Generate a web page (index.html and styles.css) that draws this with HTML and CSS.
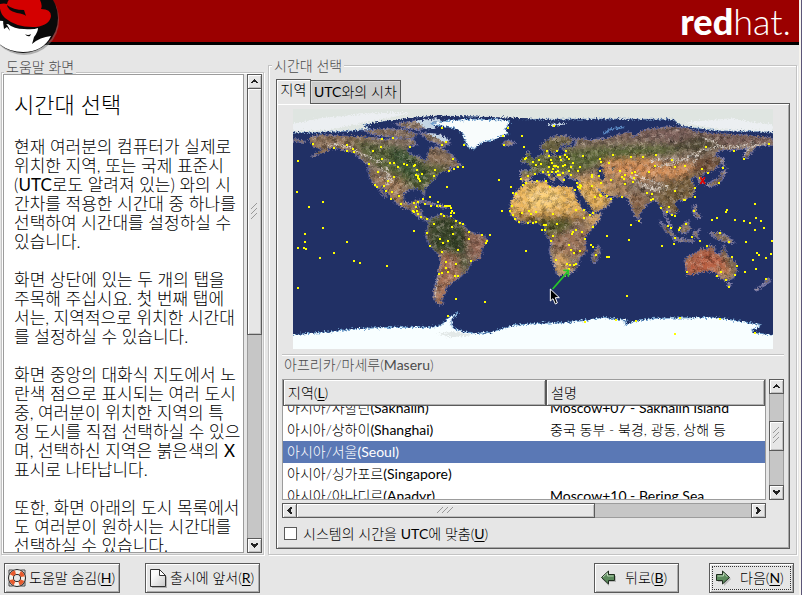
FILE: index.html
```html
<!DOCTYPE html>
<html lang="ko">
<head>
<meta charset="utf-8">
<title>시간대 선택</title>
<link rel="stylesheet" href="styles.css">
</head>
<body>
<div class="window">
  <header class="banner">
    <svg class="shadowman" viewBox="0 0 60 55" aria-hidden="true">
      <circle cx="24" cy="20" r="35" fill="#777" opacity=".5"/>
      <circle cx="23" cy="18" r="35" fill="#0a0a0a"/>
      <path d="M-12 20L3 21Q4 25 8 24Q14 29 24 29Q34 30 38 28Q38 32 34 37Q33 41 32 44Q40 37 51 36Q43 52 23 52Q3 52-10 34Z" fill="#fff"/>
      <path d="M3 22Q8 24 10 31L7 27 4 29Z" fill="#0a0a0a"/>
      <path d="M25 34Q28 36 31 34L30 36Q27 37 25 34Z" fill="#0a0a0a"/>
      <path d="M0 4Q4 3 7 4Q8-1 12-2L39-2Q43 5 41 9Q51 9 51 16Q50 25 36 27Q17 28 5 18Q-1 12 0 4Z" fill="#d40000"/>
      <path d="M7 5Q7 10 17 13Q24 14 26 16L24 10Q13 10 7 5Z" fill="#0a0a0a"/>
    </svg>
    <div class="wordmark"><b>red</b>hat.</div>
  </header>

  <main class="panels">
    <section class="frame help">
      <h2 class="frame-title">도움말 화면</h2>
      <div class="help-row">
        <article class="help-text">
          <h1>시간대 선택</h1>
          <p>현재 여러분의 컴퓨터가 실제로<br>위치한 지역, 또는 국제 표준시<br>(<span class="strong">UTC</span>로도 알려져 있는) 와의 시<br>간차를 적용한 시간대 중 하나를<br>선택하여 시간대를 설정하실 수<br>있습니다.</p>
          <p>화면 상단에 있는 두 개의 탭을<br>주목해 주십시요. 첫 번째 탭에<br>서는, 지역적으로 위치한 시간대<br>를 설정하실 수 있습니다.</p>
          <p>화면 중앙의 대화식 지도에서 노<br>란색 점으로 표시되는 여러 도시<br>중, 여러분이 위치한 지역의 특<br>정 도시를 직접 선택하실 수 있으<br>며, 선택하신 지역은 붉은색의 <b>X</b><br>표시로 나타납니다.</p>
          <p>또한, 화면 아래의 도시 목록에서<br>도 여러분이 원하시는 시간대를<br>선택하실 수 있습니다.</p>
        </article>
        <div class="scroll scroll-v">
          <button class="step" aria-label="위로"><svg viewBox="0 0 7 5"><path d="M3 0h1v1h1v1h1v1h1v1H5V3H2v1H0V3h1V2h1V1h1z"/></svg></button>
          <div class="thumb help-thumb"><svg class="grip" viewBox="0 0 7 17"><path d="M0 6L6 0M0 11L6 5M0 16L6 10"/></svg></div>
          <div class="trough"></div>
          <button class="step" aria-label="아래로"><svg viewBox="0 0 7 5"><path d="M0 0h2v1h3V0h2v2H6v1H5v1H4v1H3V4H2V3H1V2H0z"/></svg></button>
        </div>
      </div>
    </section>

    <section class="frame zone">
      <h2 class="frame-title">시간대 선택</h2>
      <div class="tabs" role="tablist">
        <button class="tab active" role="tab" aria-selected="true">지역</button>
        <button class="tab" role="tab" aria-selected="false"><span class="strong">UTC</span>와의 시차</button>
      </div>
      <div class="page">
        <svg class="map" viewBox="69 177 1440 720" role="img" aria-label="세계 지도">
          <defs>
            <filter id="coast" x="0" y="0" width="1" height="1">
              <feTurbulence type="fractalNoise" baseFrequency=".18" numOctaves="3" seed="4"/>
              <feDisplacementMap in="SourceGraphic" scale="17" xChannelSelector="R" yChannelSelector="G"/>
            </filter>
            <filter id="grain" x="0" y="0" width="1" height="1">
              <feTurbulence type="fractalNoise" baseFrequency=".07" numOctaves="4" seed="9"/>
              <feColorMatrix values="0 0 0 0 0  0 0 0 0 0  0 0 0 0 0  2.4 0 0 0 -1.05"/>
            </filter>
            <filter id="glint" x="0" y="0" width="1" height="1">
              <feTurbulence type="fractalNoise" baseFrequency=".08" numOctaves="4" seed="21"/>
              <feColorMatrix values="0 0 0 0 1  0 0 0 0 .85  0 0 0 0 .75  0 2.4 0 0 -1.1"/>
            </filter>
            <filter id="soft" x="-.3" y="-.3" width="1.6" height="1.6"><feGaussianBlur stdDeviation="10"/></filter>
            <path id="north-america" d="M120 262L150 255 200 258 250 260 300 262 350 268 400 262 430 270 440 285 415 290 412 305 425 315 450 320 465 335 475 322 475 310 480 295 500 290 525 300 545 315 560 335 575 345 550 352 530 350 545 360 505 368 495 385 480 400 465 415 462 437 455 420 440 415 420 418 400 430 400 455 420 462 440 448 450 452 440 470 452 478 455 495 475 507 490 502 470 512 445 502 420 480 390 468 370 450 355 430 335 405 330 410 350 440 345 442 325 415 315 405 300 385 295 360 293 345 275 330 260 315 245 305 215 298 185 292 165 305 125 320 140 310 160 298 130 290 120 275Z"/>
            <path id="atlantic-isles" d="M69 265L105 275 100 280 69 272ZM280 242L340 236 400 238 442 252 430 265 380 262 320 256ZM375 222L440 212 475 232 440 240 400 232ZM450 247L510 255 540 278 520 292 500 280 470 268ZM445 455L470 452 502 465 480 463ZM505 464L530 468 530 474 505 472ZM700 275L716 272 735 278 720 286 702 284Z"/>
            <path id="south-america" d="M478 510L492 502 510 495 535 498 555 510 580 525 595 545 640 557 652 572 638 590 630 625 605 635 590 665 570 680 562 690 545 695 538 705 528 715 525 730 513 745 520 761 505 762 492 745 492 720 500 695 505 670 512 640 512 620 490 598 478 580 466 558 472 540Z"/>
            <path id="africa" d="M757 408L775 394 825 392 835 405 855 412 870 408 908 415 920 450 940 480 960 495 993 490 990 503 970 528 945 560 945 585 948 605 930 620 925 640 915 660 890 675 865 677 858 665 850 635 838 605 843 575 827 550 825 530 808 518 750 518 735 505 720 490 722 460 735 430ZM984 586L991 600 978 637 967 637 968 612Z"/>
            <path id="eurasia" transform="translate(780)" d="M-28 390L-28 362 2 362 8 350-5 342 15 330 25 318 42 312 48 298 55 298 55 316 90 318 110 308 95 295 130 290 140 275 125 268 150 265 185 270 230 265 280 250 300 245 310 262 340 240 420 230 470 235 500 245 560 252 640 255 729 264 729 285 700 285 680 290 650 325 640 320 652 295 610 300 570 300 555 315 580 325 570 345 545 362 520 370 515 380 524 400 510 400 499 378 480 385 495 410 490 435 465 450 445 450 430 460 445 480 435 492 420 490 410 480 408 500 425 530 415 522 400 482 385 460 375 450 355 460 330 490 325 505 315 500 300 460 290 440 260 440 240 437 215 425 200 405 210 430 248 450 230 470 190 488 180 482 165 450 148 425 143 400 150 390 120 385 115 375 100 380 100 395 85 385 70 365 60 372 75 385 70 395 50 375 35 365 10 375 0 385-10 395Z"/>
            <path id="eurasian-isles" transform="translate(780)" d="M30 292L45 275 75 258 105 256 130 268 115 287 95 280 86 298 72 310 58 298 38 300ZM-15 328L-7 304 8 325 18 343-5 345ZM-25 325L-15 322-16 336-25 338ZM528 407L548 392 568 386 574 366 590 358 580 382 568 400 540 410ZM576 325L582 325 584 350 578 350ZM490 465L500 468 498 485 512 500 505 507 490 490ZM322 508L332 506 330 516Z"/>
            <path id="oceania" transform="translate(780 480)" d="M448 52L475 33 481 58 465 72 450 66ZM388 33L410 50 434 76 430 84 405 62ZM432 84L490 91 490 97 432 91ZM490 65L508 60 500 68 505 85 492 80ZM540 68L570 68 598 82 612 100 580 94 560 88ZM463 150L475 140 495 130 515 115 535 118 540 105 557 112 552 125 572 137 580 105 592 135 615 155 620 180 610 205 588 212 565 200 555 185 530 182 500 192 472 195 470 175ZM592 221L603 221 597 232ZM712 206L722 212 704 224 678 243 676 238 700 222Z"/>
            <clipPath id="land-clip">
              <use href="#north-america"/><use href="#atlantic-isles"/><use href="#south-america"/><use href="#africa"/><use href="#eurasia"/><use href="#eurasian-isles"/><use href="#oceania"/>
            </clipPath>
            <clipPath id="frame-clip"><rect x="69" y="177" width="1440" height="720"/></clipPath>
          </defs>
          <rect x="69" y="177" width="1440" height="720" fill="#213065"/>
          <g clip-path="url(#frame-clip)">
            <g filter="url(#coast)">
              <g fill="#85705f" stroke="#7474a0" stroke-width="4">
                <use href="#north-america"/><use href="#atlantic-isles"/><use href="#south-america"/><use href="#africa"/><use href="#eurasia"/><use href="#eurasian-isles"/><use href="#oceania"/>
              </g>
              <g clip-path="url(#land-clip)">
                <g filter="url(#soft)">
                  <path fill="#8b6f58" d="M90 240H300L260 310 120 330ZM460 280L580 350 520 370 470 335Z"/>
                  <path fill="#566238" d="M240 270L330 285 415 300 460 340 545 350 450 430 390 390 310 340Z"/>
                  <path fill="#3c5634" d="M350 285L410 300 450 345 480 385 440 400 380 350Z"/>
                  <path fill="#a07b5c" d="M300 370L400 390 400 450 440 480 360 450Z"/>
                  <path fill="#38452a" d="M470 500L560 500 600 560 590 610 540 620 480 600Z"/>
                  <path fill="#4a5635" d="M450 470L500 510 560 670 590 650 600 620 560 630Z"/>
                  <path fill="#946757" d="M590 545L670 550 630 640 600 620Z"/>
                  <path fill="#a87358" d="M515 605L560 620 570 670 530 780 490 760 495 690Z"/>
                  <path fill="#edb75d" d="M710 390L920 390 950 488 700 500Z"/>
                  <path fill="#fbcf76" d="M770 420L840 410 880 440 860 470 780 480Z"/>
                  <path fill="#a6743f" d="M700 492H950V512H700Z"/>
                  <path fill="#595a2c" d="M750 508L900 502 905 530 850 560 830 550Z"/>
                  <path fill="#9a7258" d="M840 560L960 530 950 620 860 620Z"/>
                  <path fill="#dfac67" d="M840 625L885 610 905 660 870 680ZM955 498L1000 480 980 530 950 530Z"/>
                  <path fill="#5d6739" d="M750 310L900 300 1000 290 1200 285 1260 300 1130 320 1000 340 920 370 850 365 760 375Z"/>
                  <path fill="#67613e" d="M800 260L920 270 880 320 820 320Z"/>
                  <path fill="#7c615a" d="M900 250L1230 225 1520 255 1500 285 1280 290 1130 270Z"/>
                  <path fill="#4f4836" d="M1180 290L1290 255 1360 280 1290 310Z"/>
                  <path fill="#d48f58" d="M1000 330L1130 325 1200 345 1290 335 1240 385 1120 390 1000 385Z"/>
                  <path fill="#b78b61" d="M910 375L1050 370 1080 440 970 420Z"/>
                  <path fill="#e8b156" d="M920 395L985 395 1030 450 970 490Z"/>
                  <path fill="#765f3e" d="M1185 390L1280 370 1280 440 1230 500 1150 450Z"/>
                  <path fill="#6d4b35" d="M1270 330L1350 320 1330 370 1270 370Z"/>
                  <path fill="#8c6547" d="M1070 430L1130 440 1110 510Z"/>
                  <path fill="#b85f42" d="M1240 630L1310 590 1400 650 1370 670 1250 680Z"/>
                  <path fill="#786448" d="M1350 580L1400 640 1405 680 1370 650Z"/>
                  <path fill="#d99c69" d="M1330 650L1385 670 1370 690ZM1240 620L1260 625 1250 640Z"/>
                </g>
                <g fill="none" stroke="#dad2c8" stroke-width="5" stroke-dasharray="11 3 5 4">
                  <path d="M170 292L195 282 240 292 265 308 300 322 340 340M330 355L360 375 365 400M325 380L365 390M350 350L352 405M498 620L506 650 500 700 495 740"/>
                  <path d="M1080 380L1110 400 1150 415 1190 418M1095 375L1150 395 1195 410M1115 410L1170 425M1140 335L1180 325 1240 330 1260 315M1160 350L1210 340 1285 315 1270 340M1260 315L1300 300 1350 290 1330 275 1290 260M1350 290L1400 292 1450 278M1420 318L1440 290 1490 280"/>
                </g>
                <rect x="69" y="177" width="1440" height="720" filter="url(#grain)" opacity=".5"/>
                <rect x="69" y="177" width="1440" height="720" filter="url(#glint)" opacity=".45"/>
              </g>
              <path fill="#213065" d="M981 353L1000 350 995 365 1008 385 995 391 985 375Z"/>
              <path fill="none" stroke="#213065" stroke-width="8" d="M925 426L943 455 967 486"/>
              <path fill="#3e5968" d="M1022 354L1032 352 1030 362Z"/>
              <path fill="#dfe5e1" stroke="#6893c4" stroke-width="2" d="M50 160H1530V247L1340 242 1260 232 1230 225 1210 208 980 207 780 208 700 204 600 200 500 198 420 205 340 215 280 225 300 237 240 243 180 246 120 248 50 246Z"/>
              <path fill="#f8fcfc" stroke="#6fa3d2" stroke-width="3" d="M478 222L530 212 620 207 700 210 720 213 705 240 715 250 690 260 670 270 640 275 625 285 612 298 595 292 583 270 580 252 560 236 520 228Z"/>
              <path fill="#eceff2" d="M50 225L150 205 300 190 430 188 300 215 180 240 50 242ZM1240 218L1380 205 1509 225V243L1350 238Z"/>
              <path fill="#c5d5e4" d="M435 212L500 205 515 214 480 220 500 236 470 238ZM470 248L505 252 540 270 525 278ZM830 222L890 219 880 224 840 228Z"/>
              <path fill="none" stroke="#5b8ac4" stroke-width="5" d="M1002 252L1018 238 1062 232"/>
              <path fill="none" stroke="#213065" stroke-width="5" d="M300 222L400 208 500 200 600 202 780 207"/>
              <path fill="#f8feff" stroke="#6fa3d2" stroke-width="3" d="M50 856L120 850 190 845 250 836 370 832 480 832 510 828 530 810 540 798 565 790 555 798 545 808 545 825 550 835 580 845 620 850 660 848 700 835 740 825 810 820 880 818 940 812 1000 802 1040 808 1070 810 1065 825 1090 815 1150 805 1230 804 1330 802 1400 812 1470 823 1465 835 1445 837 1450 848 1530 858V910H50Z"/>
              <path fill="#e3e9e8" d="M500 850L560 845 610 856 540 862Z"/>
            </g>
          </g>
          <g class="cities">
            <path d="M84 333h0M129 282h0M81 426h0M117 471h0M159 456h0M159 534h0M192 294h0M231 285h0M231 303h0M249 297h0M252 306h0M297 342h0M309 303h0M333 291h0M336 267h0M369 264h0M420 291h0M336 327h0M360 339h0M372 339h0M384 351h0M402 342h0M411 345h0M432 348h0M435 345h0M441 360h0M456 372h0M438 375h0M444 378h0M444 384h0M447 387h0M450 393h0M324 366h0M372 381h0M354 393h0M342 408h0M315 405h0M321 411h0M348 423h0M366 426h0M387 438h0M363 447h0M393 462h0M495 360h0M492 378h0M537 363h0M552 357h0M564 351h0M579 351h0M549 327h0M531 411h0M480 441h0M459 447h0M465 462h0M444 456h0M432 459h0M438 471h0M432 486h0M441 483h0M429 483h0M444 492h0M453 501h0M471 507h0M483 468h0M504 456h0M501 468h0M510 468h0M525 468h0M531 468h0M537 468h0M540 468h0M543 474h0M546 483h0M543 489h0M552 489h0M543 498h0M513 492h0M522 498h0M558 513h0M570 519h0M579 522h0M492 522h0M546 531h0M516 234h0M516 285h0M528 276h0M582 285h0M714 234h0M699 258h0M702 285h0M756 258h0M762 291h0M768 324h0M765 327h0M789 336h0M687 390h0M723 411h0M729 429h0M738 432h0M753 387h0M759 405h0M768 399h0M774 378h0M795 372h0M696 483h0M720 483h0M726 468h0M756 489h0M777 483h0M783 492h0M798 486h0M729 495h0M735 507h0M747 516h0M774 519h0M789 519h0M798 516h0"/>
            <path transform="translate(780)" d="M72 228h0M9 336h0M18 345h0M27 330h0M33 342h0M51 303h0M57 318h0M63 330h0M66 339h0M81 303h0M90 321h0M93 330h0M105 315h0M108 303h0M111 321h0M117 327h0M159 318h0M72 348h0M78 348h0M84 351h0M69 357h0M57 351h0M54 366h0M39 366h0M15 372h0M57 375h0M66 366h0M78 366h0M84 363h0M99 348h0M105 345h0M123 351h0M129 339h0M150 351h0M144 363h0M117 363h0M99 369h0M90 375h0M84 375h0M102 390h0M60 411h0M48 393h0M21 393h0M123 375h0M141 399h0M150 405h0M153 408h0M150 414h0M135 420h0M144 411h0M186 375h0M186 381h0M210 363h0M210 327h0M213 336h0M237 339h0M249 315h0M303 321h0M339 321h0M378 315h0M426 330h0M435 351h0M465 348h0M375 348h0M357 366h0M315 366h0M306 369h0M312 384h0M309 396h0M285 402h0M285 375h0M276 381h0M282 387h0M270 363h0M243 390h0M213 399h0M207 378h0M186 408h0M195 441h0M210 435h0M213 438h0M231 438h0M243 447h0M276 441h0M351 429h0M366 432h0M369 447h0M363 450h0M393 474h0M411 486h0M417 471h0M426 495h0M435 498h0M435 423h0M462 450h0M465 450h0M495 441h0M495 414h0M510 384h0M534 369h0M516 357h0M579 354h0M567 399h0M528 291h0M612 303h0M642 327h0M717 282h0M492 483h0M591 480h0M588 486h0M675 462h0M561 504h0M546 510h0M615 510h0M642 513h0M660 519h0M678 504h0M693 513h0M702 534h0M138 480h0M162 480h0M162 504h0M189 489h0M180 495h0M189 531h0M303 525h0M327 513h0M414 528h0M423 534h0M468 522h0M450 534h0M69 492h0M18 486h0M3 492h0M9 519h0M18 516h0M42 525h0M48 525h0M81 522h0"/>
            <path transform="translate(0 480)" d="M432 63h0M159 54h0M105 72h0M105 96h0M84 114h0M102 114h0M108 117h0M150 144h0M192 129h0M231 96h0M252 153h0M270 159h0M351 168h0M84 234h0M471 69h0M480 108h0M549 72h0M510 87h0M519 99h0M534 93h0M516 126h0M564 120h0M528 156h0M528 174h0M558 162h0M534 186h0M516 189h0M507 192h0M555 198h0M564 198h0M603 153h0M597 66h0M597 87h0M636 75h0M660 75h0M651 93h0M648 99h0M558 267h0M645 276h0M534 318h0M768 123h0"/>
            <path transform="translate(780 480)" d="M36 60h0M45 60h0M69 78h0M63 93h0M138 60h0M129 66h0M126 72h0M156 66h0M165 87h0M117 105h0M123 120h0M132 129h0M150 123h0M183 105h0M189 111h0M198 135h0M231 141h0M237 141h0M231 78h0M297 90h0M396 108h0M432 102h0M435 84h0M447 60h0M486 81h0M510 93h0M531 108h0M570 69h0M597 96h0M648 96h0M675 60h0M726 93h0M723 132h0M708 144h0M681 129h0M687 135h0M669 150h0M678 177h0M645 186h0M708 207h0M606 141h0M621 168h0M615 195h0M573 186h0M561 198h0M588 210h0M597 231h0M471 186h0M291 258h0M78 150h0M111 162h0M120 165h0M132 165h0M138 162h0M117 177h0M165 336h0M258 330h0M318 333h0M450 324h0M570 327h0M435 372h0M675 369h0"/>
          </g>
          <path class="selected-mark" d="M1291 382L1305 402M1305 382L1291 402"/>
          <path class="pointer-line" d="M848 717L894 664M880 661H895V680"/>
          <path d="M841 717V753L849 746 856 762 862 759 856 743H868Z" fill="#000" stroke="#fff" stroke-width="3"/>
        </svg>
        <div class="rule"></div>
        <div class="hovered">아프리카/마세루(<span>Maseru</span>)</div>
        <div class="list-grid">
          <div class="list" id="zones">
            <table>
              <colgroup><col class="col-zone"><col></colgroup>
              <thead><tr><th>지역(<u>L</u>)</th><th>설명</th></tr></thead>
              <tbody>
                <tr><td>아시아/사할린<span>(Sakhalin)</span></td><td><span>Moscow+07 - Sakhalin Island</span></td></tr>
                <tr><td>아시아/상하이<span>(Shanghai)</span></td><td>중국 동부 - 북경, 광동, 상해 등</td></tr>
                <tr class="current"><td>아시아/서울<span>(Seoul)</span></td><td></td></tr>
                <tr><td>아시아/싱가포르<span>(Singapore)</span></td><td></td></tr>
                <tr><td>아시아/아나디르<span>(Anadyr)</span></td><td><span>Moscow+10 - Bering Sea</span></td></tr>
              </tbody>
            </table>
          </div>
          <div class="scroll scroll-v">
            <button class="step" aria-label="위로"><svg viewBox="0 0 7 5"><path d="M3 0h1v1h1v1h1v1h1v1H5V3H2v1H0V3h1V2h1V1h1z"/></svg></button>
            <div class="trough"></div>
            <div class="thumb list-thumb"><svg class="grip" viewBox="0 0 7 17"><path d="M0 6L6 0M0 11L6 5M0 16L6 10"/></svg></div>
            <div class="trough lower"></div>
            <button class="step" aria-label="아래로"><svg viewBox="0 0 7 5"><path d="M0 0h2v1h3V0h2v2H6v1H5v1H4v1H3V4H2V3H1V2H0z"/></svg></button>
          </div>
          <div class="scroll scroll-h">
            <button class="step" aria-label="왼쪽"><svg class="side" viewBox="0 0 5 7"><path d="M5 0v2H4v3h1v2H3V6H2V5H1V4H0V3h1V2h1V1h1V0z"/></svg></button>
            <div class="thumb wide-thumb"><svg class="grip flat" viewBox="0 0 17 7"><path d="M0 6L6 0M5 6L11 0M10 6L16 0"/></svg></div>
            <div class="trough"></div>
            <button class="step" aria-label="오른쪽"><svg class="side" viewBox="0 0 5 7"><path d="M0 0h2v1h1v1h1v1h1v1H4v1H3v1H2v1H0V5h1V2H0z"/></svg></button>
          </div>
        </div>
        <label class="utc"><input type="checkbox"><span>시스템의 시간을 <span class="strong">UTC</span>에 맞춤(<u>U</u>)</span></label>
      </div>
    </section>
  </main>

  <footer class="actions">
    <button class="action hide-help">
      <svg viewBox="0 0 20 20"><circle cx="11" cy="11" r="8" fill="#777" opacity=".6"/><path d="M2 2h3l5 1 5-1h3v3l-1 5 1 5v3h-3l-5-1-5 1H2v-3l1-5-1-5z" fill="none" stroke="#444"/><circle cx="10" cy="10" r="6" fill="none" stroke="#222" stroke-width="6"/><circle cx="10" cy="10" r="6" fill="none" stroke="#f4efe8" stroke-width="4"/><circle cx="10" cy="10" r="6" fill="none" stroke="#e8592c" stroke-width="4" stroke-dasharray="4.7 4.72" stroke-dashoffset="-2.4"/><circle cx="10" cy="10" r="3" fill="#e6e6e6"/></svg>
      <span>도움말 숨김(<u>H</u>)</span>
    </button>
    <button class="action notes">
      <svg viewBox="0 0 20 20"><defs><linearGradient id="sheet" x1="0" y1="0" x2="1" y2="1"><stop offset=".3" stop-color="#fafafa"/><stop offset="1" stop-color="#c8c8c8"/></linearGradient></defs><path d="M4 3H13L19 9V20H4Z" fill="#888" opacity=".6"/><path d="M2.500 1.500H11.500L17.500 7.500V18.500H2.500Z" fill="url(#sheet)" stroke="#333"/><path d="M11.500 1.500V7.500H17.500Z" fill="#fff" stroke="#333"/></svg>
      <span>출시에 앞서(<u>R</u>)</span>
    </button>
    <span class="space"></span>
    <button class="action back">
      <svg viewBox="0 0 20 20"><path d="M3 11L10 4V8H17V14H10V18Z" fill="#999" opacity=".6"/><path d="M2.500 9.500L9.500 3V6.500H15.500V12.500H9.500V16Z" fill="#5b8a5c" stroke="#1e2c1e"/><path d="M4 9L8.500 5V8H14.500" fill="none" stroke="#b7d3b3"/></svg>
      <span>뒤로(<u>B</u>)</span>
    </button>
    <button class="action next">
      <svg viewBox="0 0 20 20"><path d="M17 11L10 4V8H4V14H10V18Z" fill="#999" opacity=".6"/><path d="M15.500 9.500L8.500 3V6.500H2.500V12.500H8.500V16Z" fill="#5b8a5c" stroke="#1e2c1e"/><path d="M3.500 8H9.500V5L13.500 9" fill="none" stroke="#b7d3b3"/></svg>
      <span>다음(<u>N</u>)</span>
    </button>
  </footer>
</div>
<script src="main.js"></script>
</body>
</html>
```
FILE: main.js
```js
// Open the zone list scrolled so that the current zone sits mid-view.
document.getElementById("zones").scrollTop = 9;
```
FILE: styles.css
```css
:root {
  --bg: #e6e6e6;
  --dark: #5a5a5a;
  --mid: #9c9c9c;
  --line: #c3c3c3;
  --trough: #c6c6c6;
}

* { box-sizing: border-box; }

body {
  margin: 0;
  background: var(--bg);
  color: #000;
  font: 300 14px/20px Lato, "Noto Sans CJK KR", sans-serif;
}

h1, h2, p { margin: 0; font-weight: 300; }
button { font: inherit; color: inherit; padding: 0; margin: 0; border-radius: 0; }
u { text-underline-offset: 2px; }
.strong, u { font-weight: 400; }

.window {
  display: flex;
  flex-direction: column;
  height: 100vh;
  overflow: hidden;
  border-right: 1px solid #5b5678;
  box-shadow: inset -2px 0 #f6f4ee;
  padding-right: 2px;
}

.banner {
  display: flex;
  justify-content: space-between;
  height: 45px;
  flex: none;
  background: #9b0000;
  border-bottom: 3px solid #000;
}
.shadowman { width: 60px; height: 55px; position: relative; z-index: 1; }
.wordmark {
  color: #fff;
  font: 300 36px/42px Lato, sans-serif;
  padding-right: 8px;
}
.wordmark b { font-weight: 900; }

.panels {
  display: flex;
  flex: 1;
  min-height: 0;
  gap: 4px;
  padding: 0 2px 0 1px;
}

.frame {
  display: flex;
  flex-direction: column;
  border: 1px solid var(--line);
  box-shadow: 1px 1px #fff, inset 1px 1px #fff;
}
.frame-title {
  flex: none;
  align-self: flex-start;
  font-size: 14px;
  line-height: 16px;
  padding: 0 2px;
  background: var(--bg);
  color: #4c4c4c;
}

.help { width: 263px; flex: none; margin-top: 27px; padding: 1px; }
.help .frame-title { margin: -15px 0 -1px 1px; }
.help-row { display: flex; flex: 1; min-height: 0; gap: 3px; }
.help-text {
  flex: 1;
  overflow: hidden;
  background: #fff;
  border: 1px solid var(--mid);
  padding: 16px 0 0 10px;
  font-size: 17px;
  line-height: 19px;
  white-space: nowrap;
}
.help-text h1 { font-size: 22px; line-height: 28px; margin-bottom: 18px; }
.help-text p { margin-bottom: 19px; }

.scroll { display: flex; background: var(--trough); }
.scroll-v { flex-direction: column; width: 15px; }
.scroll-h { height: 15px; }
.step, .thumb {
  display: flex;
  align-items: center;
  justify-content: center;
  flex: none;
  background: var(--bg);
  border: 1px solid var(--dark);
  box-shadow: inset 1px 1px #fff, inset -1px -1px #c0c0c0;
}
.step { width: 15px; height: 15px; }
.step svg { width: 7px; height: 5px; fill: #222; }
.step .side { width: 5px; height: 7px; }
.trough { flex: 1; border: 0 solid var(--mid); border-width: 0 1px; }
.scroll-h .trough { border-width: 1px 0; }
.grip { width: 7px; height: 17px; fill: none; stroke: #999; }
.grip.flat { width: 17px; height: 7px; }
.help-thumb { height: 247px; margin-top: -1px; }
.list-thumb { height: 30px; }
.lower { flex-grow: 1.300; }
.wide-thumb { width: 299px; margin-left: -1px; }

.zone { flex: 1; min-width: 0; margin-top: 20px; padding: 0 6px 5px 7px; }
.zone .frame-title { margin: -8px 0 5px -4px; }

.tabs { display: flex; align-items: flex-end; height: 24px; flex: none; }
.tab {
  height: 23px;
  padding: 0 3px;
  background: #cdcdcd;
  border: 1px solid var(--dark);
  border-bottom: 0;
  box-shadow: inset 1px 1px #dedede;
}
.tab.active {
  height: 25px;
  width: 35px;
  padding: 0 0 4px;
  margin: 0 -1px -1px 0;
  background: var(--bg);
  box-shadow: inset 1px 1px #fff;
  position: relative;
  z-index: 1;
}

.page {
  display: flex;
  flex-direction: column;
  flex: 1;
  min-height: 0;
  padding: 5px;
  border: 1px solid var(--dark);
  box-shadow: inset 1px 1px #fff, inset -1px -1px #a8a8a8;
}
.map { width: 480px; height: 240px; flex: none; align-self: center; }
.cities { fill: none; stroke: #ff0; stroke-width: 6; stroke-linecap: square; shape-rendering: crispEdges; }
.selected-mark { fill: none; stroke: #e00000; stroke-width: 5; }
.pointer-line { fill: none; stroke: #28c828; stroke-width: 5; }

.rule { height: 2px; flex: none; margin-top: 5px; background: var(--line); border-bottom: 1px solid #fff; }
.hovered { flex: none; height: 23px; line-height: 18px; padding-left: 2px; color: #4c4c4c; }
.hovered span { font-weight: 400; }

.list-grid {
  display: grid;
  grid-template: minmax(0, 1fr) 15px / minmax(0, 1fr) 15px;
  gap: 3px;
  flex: 1;
  min-height: 0;
}
.list { overflow: hidden; background: #fff; border: 1px solid var(--mid); }
.list table { width: 100%; table-layout: fixed; border-collapse: separate; border-spacing: 0; }
.col-zone { width: 263px; }
.list th {
  position: sticky;
  top: 0;
  height: 26px;
  padding: 0 4px;
  text-align: left;
  font-weight: 300;
  background: var(--bg);
  border: 1px solid var(--dark);
  border-width: 0 1px 1px;
  box-shadow: inset 1px 1px #fff, inset -1px -1px #b0b0b0;
}
.list td { height: 22px; padding: 0 4px; line-height: 20px; white-space: nowrap; }
.list td span { font-weight: 400; }
.current td { background: #5a78b5; color: #fff; }

.utc { display: flex; align-items: center; flex: none; height: 25px; gap: 6px; padding: 6px 2px 0; }
.utc input {
  appearance: none;
  width: 13px;
  height: 13px;
  margin: 0;
  background: #fff;
  border: 1px solid var(--dark);
}

.actions { display: flex; flex: none; height: 40px; padding: 8px 5px 2px 4px; }
.action {
  display: flex;
  align-items: center;
  height: 30px;
  padding: 0 0 0 2px;
  background: var(--bg);
  border: 1px solid var(--dark);
  box-shadow: inset 1px 1px #fff, inset -1px -1px #ababab;
  white-space: nowrap;
}
.action svg { width: 20px; height: 20px; margin-right: 2px; flex: none; }
.hide-help { width: 116px; margin-right: 25px; }
.notes { width: 115px; }
.space { flex: 1; }
.back, .next { width: 85px; padding-left: 4px; }
.back svg, .next svg { margin-right: 6px; }
.back { margin-right: 30px; }
.next { outline: 1px dotted #333; outline-offset: -4px; }
```
